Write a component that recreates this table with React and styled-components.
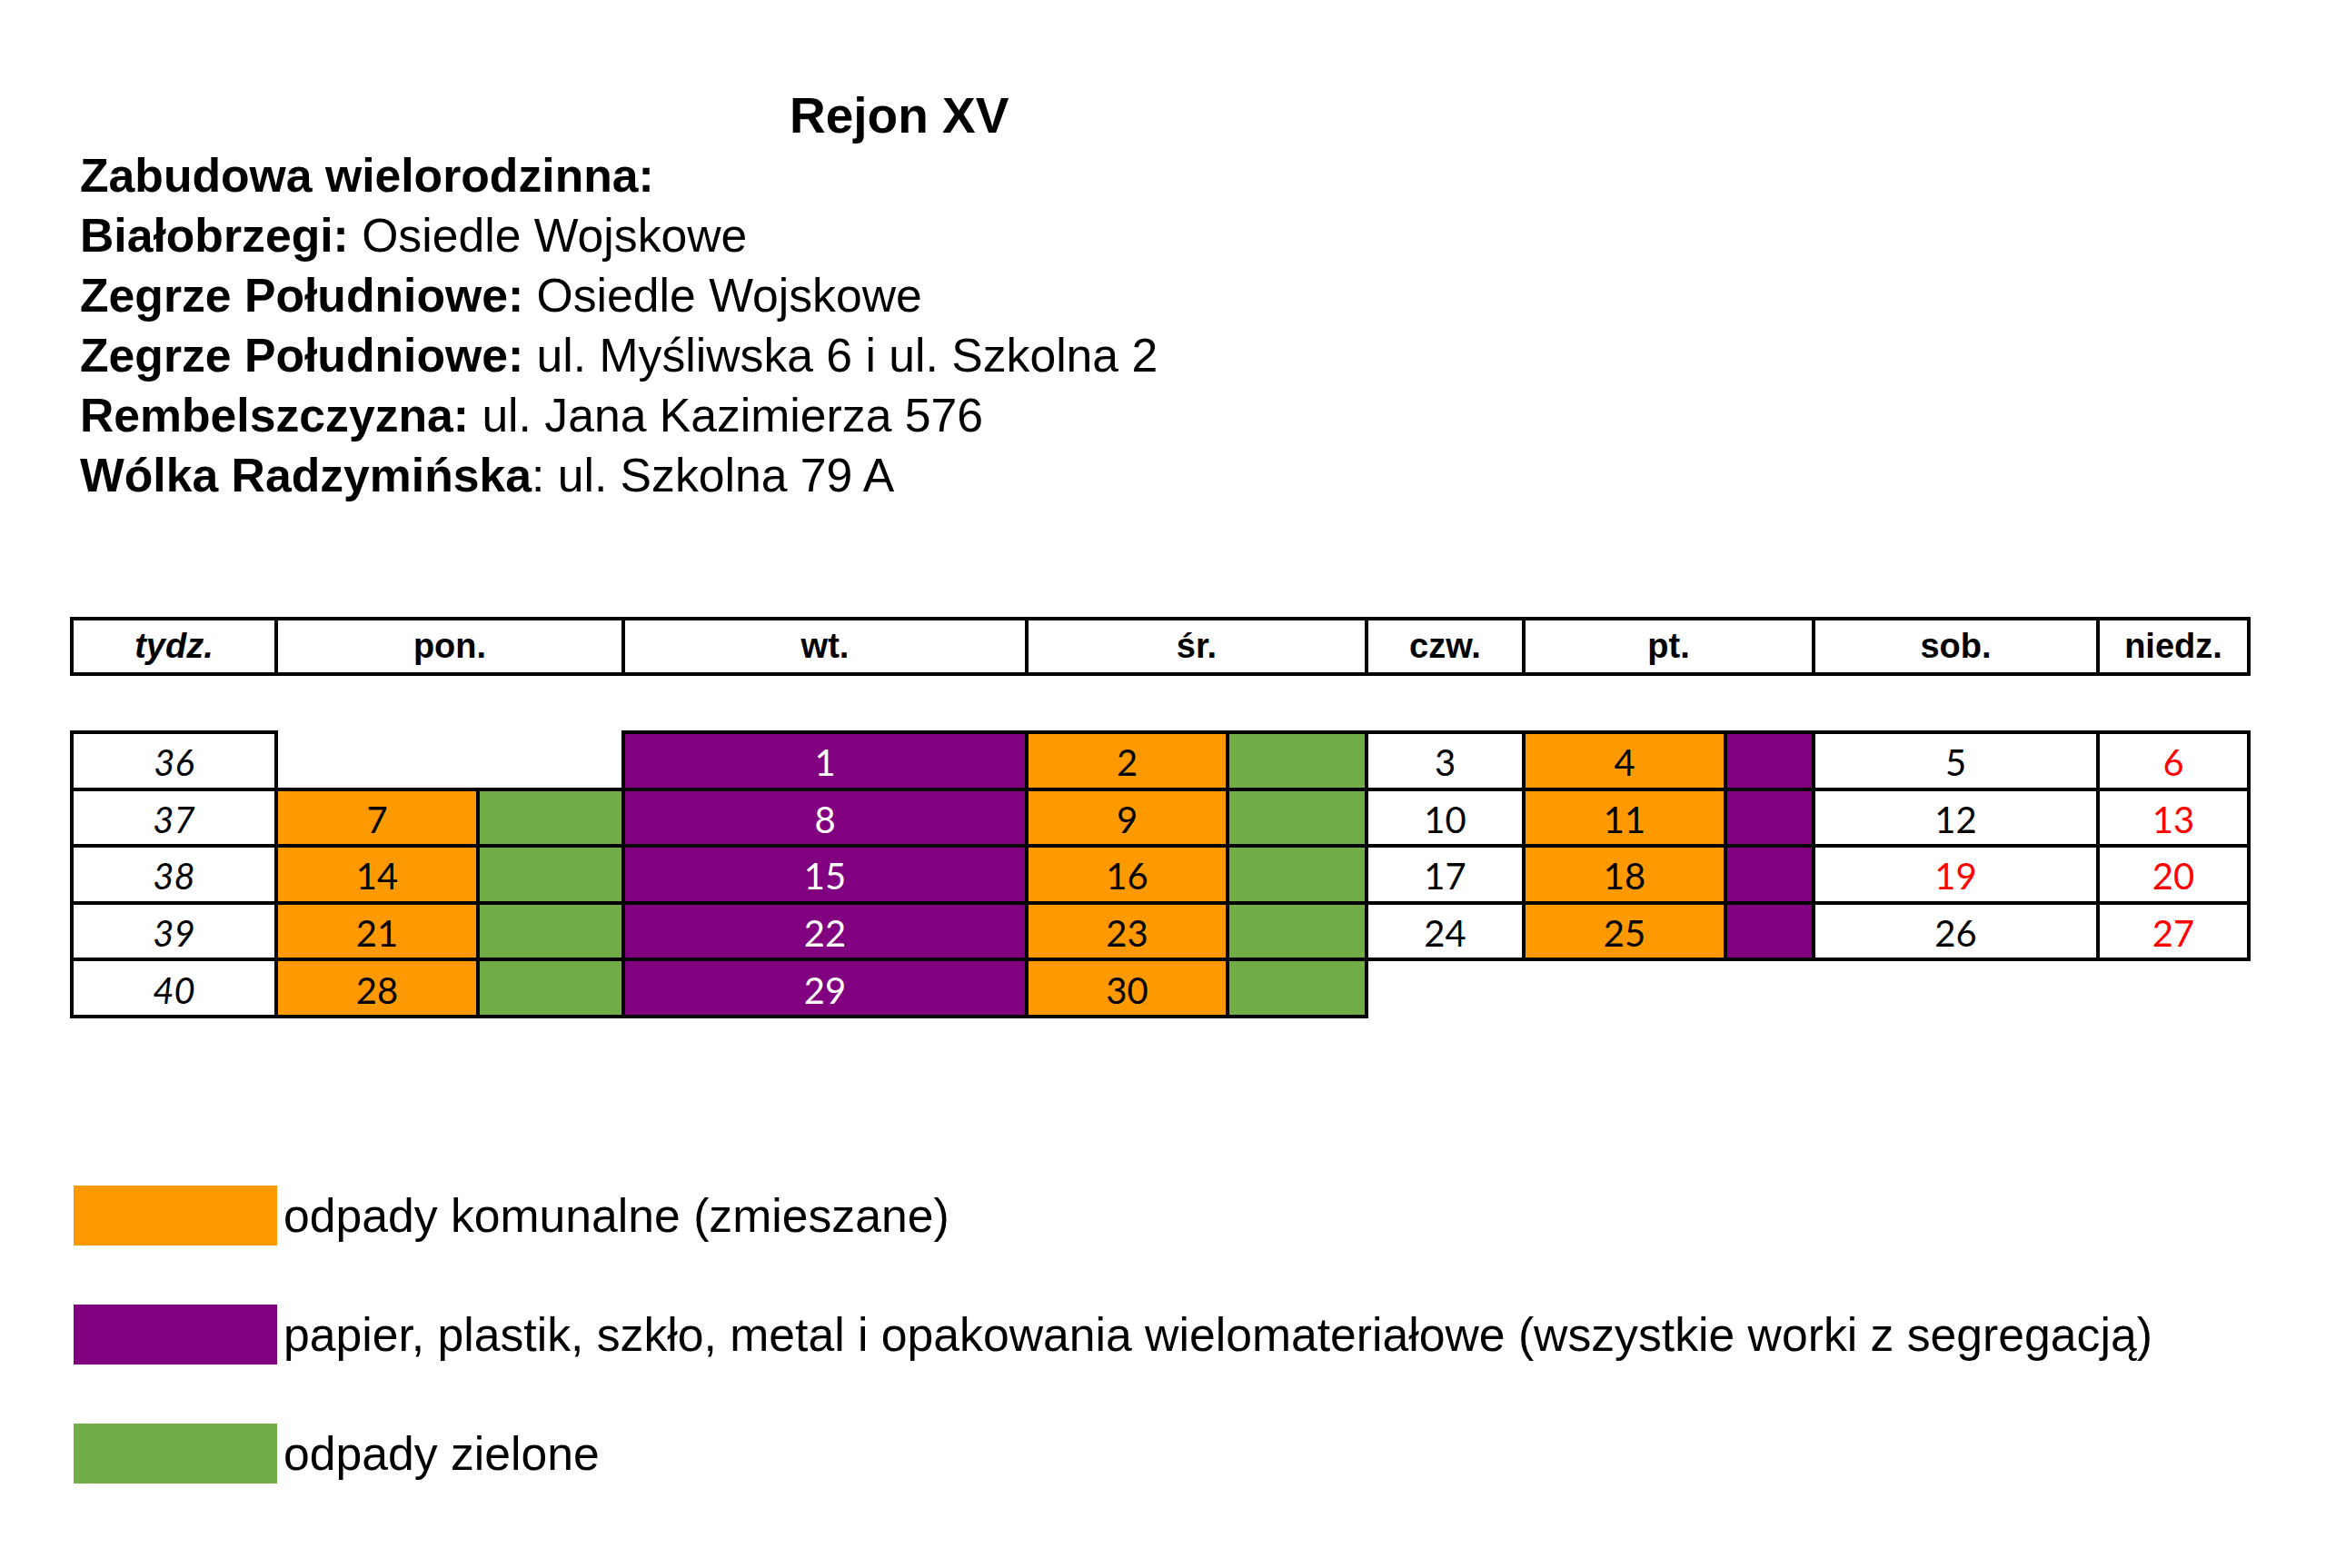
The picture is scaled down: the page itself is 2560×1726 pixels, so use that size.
import React from 'react';
import styled, { createGlobalStyle } from 'styled-components';

const ORANGE = '#ff9900';
const PURPLE = '#800080';
const GREEN = '#70ad47';
const RED = '#ff0000';

// szerokosci kolumn: tydz, pon (2), wt, sr (2), czw, pt (2), sob, niedz
const COLUMNS = '225px 222px 160px 444px 221px 153px 173px 222px 97px 313px 166px';

const GlobalStyle = createGlobalStyle`
  html, body {
    margin: 0;
    padding: 0;
    background: #fff;
  }
  body {
    width: 2560px;
    min-height: 1726px;
    font-family: "Liberation Sans", Arial, sans-serif;
    color: #000;
  }
`;

const Page = styled.div`
  width: 2560px;
  height: 1726px;
  padding-top: 94px;
  box-sizing: border-box;
  background: #fff;
`;

const Intro = styled.div`
  padding-left: 88px;
  font-size: 51.7px;
  line-height: 66px;
`;

const Title = styled.h1`
  margin: 0;
  padding-left: 781px;
  font-size: 55px;
  line-height: 66px;
  font-weight: bold;
`;

const Line = styled.div`
  white-space: nowrap;
`;

const Strong = styled.span`
  font-weight: bold;
`;

const Schedule = styled.div`
  margin-top: 123px;
  margin-left: 77px;
`;

const Grid = styled.div`
  display: grid;
  grid-template-columns: ${COLUMNS};
  height: ${p => p.$height}px;
`;

const HeadCell = styled.div`
  grid-column: ${p => p.$col} / span ${p => p.$span || 1};
  border: 4px solid #000;
  margin: 0 -4px -4px 0;
  display: flex;
  align-items: center;
  justify-content: center;
  font-family: "Liberation Sans", Arial, sans-serif;
  font-weight: bold;
  font-size: 38px;
  font-style: ${p => (p.$italic ? 'italic' : 'normal')};
`;

const Body = styled.div`
  margin-top: 64px;
`;

const Cell = styled.div`
  grid-column: ${p => p.$col} / span ${p => p.$span || 1};
  border: 4px solid #000;
  margin: 0 -4px -4px 0;
  display: flex;
  align-items: center;
  justify-content: center;
  padding-top: 4px;
  box-sizing: border-box;
  background: ${p => p.$bg || '#fff'};
  color: ${p => p.$color || '#000'};
  font-family: Lato, "Open Sans", sans-serif;
  font-size: 40px;
  line-height: 1;
  font-style: ${p => (p.$italic ? 'italic' : 'normal')};
`;

const Legend = styled.div`
  margin-top: 188px;
  margin-left: 81px;
  display: flex;
  flex-direction: column;
  gap: 65px;
`;

const LegendItem = styled.div`
  display: flex;
  align-items: center;
  gap: 7px;
  height: 66px;
`;

const Swatch = styled.div`
  width: 224px;
  height: 66px;
  background: ${p => p.$bg};
`;

const LegendText = styled.span`
  font-size: 51.7px;
  line-height: 66px;
  white-space: nowrap;
`;

const headers = [
  { col: 1, text: 'tydz.', italic: true },
  { col: 2, span: 2, text: 'pon.' },
  { col: 4, text: 'wt.' },
  { col: 5, span: 2, text: 'śr.' },
  { col: 7, text: 'czw.' },
  { col: 8, span: 2, text: 'pt.' },
  { col: 10, text: 'sob.' },
  { col: 11, text: 'niedz.' },
];

// pelny tydzien zaczynajacy sie od dnia "mon"
const fullWeek = (mon, redSat) => [
  { col: 2, bg: ORANGE, text: mon },
  { col: 3, bg: GREEN },
  { col: 4, bg: PURPLE, text: mon + 1, color: '#fff' },
  { col: 5, bg: ORANGE, text: mon + 2 },
  { col: 6, bg: GREEN },
  { col: 7, text: mon + 3 },
  { col: 8, bg: ORANGE, text: mon + 4 },
  { col: 9, bg: PURPLE },
  { col: 10, text: mon + 5, color: redSat ? RED : undefined },
  { col: 11, text: mon + 6, color: RED },
];

const weeks = [
  { week: 36, cells: fullWeek(0).slice(2) },
  { week: 37, cells: fullWeek(7) },
  { week: 38, cells: fullWeek(14, true) },
  { week: 39, cells: fullWeek(21) },
  { week: 40, cells: fullWeek(28).slice(0, 5) },
];

const legend = [
  { bg: ORANGE, text: 'odpady komunalne (zmieszane)' },
  {
    bg: PURPLE,
    text: 'papier, plastik, szkło, metal i opakowania wielomateriałowe (wszystkie worki z segregacją)',
  },
  { bg: GREEN, text: 'odpady zielone' },
];

export default function App() {
  return (
    <Page>
      <GlobalStyle />
      <Intro>
        <Title>Rejon XV</Title>
        <Line>
          <Strong>Zabudowa wielorodzinna:</Strong>
        </Line>
        <Line>
          <Strong>Białobrzegi:</Strong> Osiedle Wojskowe
        </Line>
        <Line>
          <Strong>Zegrze Południowe:</Strong> Osiedle Wojskowe
        </Line>
        <Line>
          <Strong>Zegrze Południowe:</Strong> ul. Myśliwska 6 i ul. Szkolna 2
        </Line>
        <Line>
          <Strong>Rembelszczyzna:</Strong> ul. Jana Kazimierza 576
        </Line>
        <Line>
          <Strong>Wólka Radzymińska</Strong>: ul. Szkolna 79 A
        </Line>
      </Intro>

      <Schedule>
        <Grid $height={61}>
          {headers.map(h => (
            <HeadCell key={h.col} $col={h.col} $span={h.span} $italic={h.italic}>
              {h.text}
            </HeadCell>
          ))}
        </Grid>

        <Body>
          {weeks.map(w => (
            <Grid key={w.week} $height={62.6}>
              <Cell $col={1} $italic>
                {w.week}
              </Cell>
              {w.cells.map(c => (
                <Cell key={c.col} $col={c.col} $bg={c.bg} $color={c.color}>
                  {c.text}
                </Cell>
              ))}
            </Grid>
          ))}
        </Body>
      </Schedule>

      <Legend>
        {legend.map(l => (
          <LegendItem key={l.bg}>
            <Swatch $bg={l.bg} />
            <LegendText>{l.text}</LegendText>
          </LegendItem>
        ))}
      </Legend>
    </Page>
  );
}
